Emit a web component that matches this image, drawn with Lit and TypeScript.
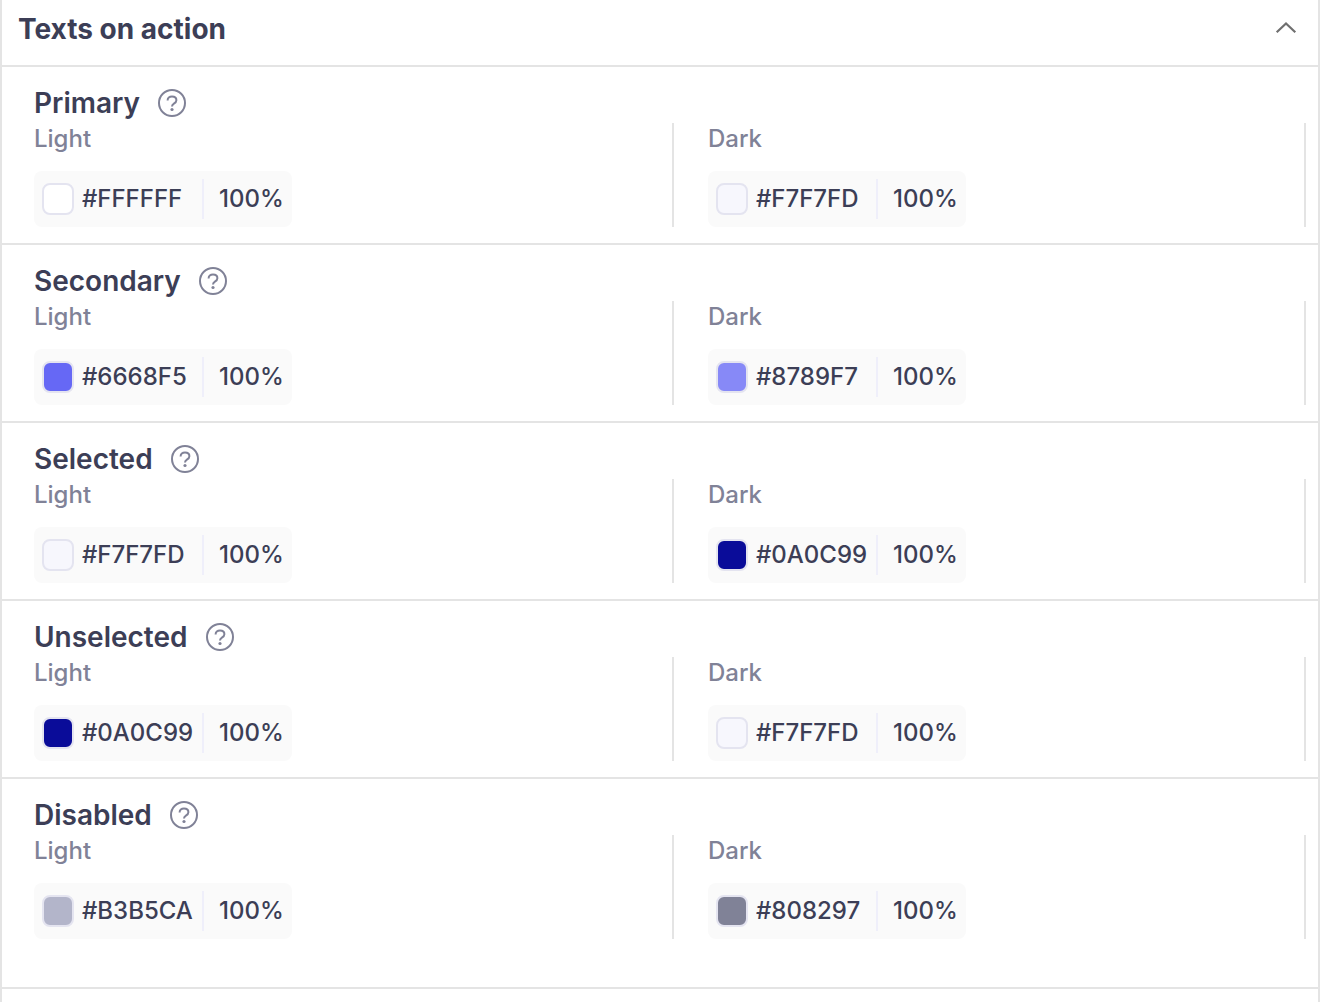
import { LitElement, html, css } from "lit";
import { customElement, property } from "lit/decorators.js";
import { styleMap } from "lit/directives/style-map.js";

interface TokenColor {
  name: string;
  light: string;
  dark: string;
}

const TOKENS: TokenColor[] = [
  { name: "Primary", light: "#FFFFFF", dark: "#F7F7FD" },
  { name: "Secondary", light: "#6668F5", dark: "#8789F7" },
  { name: "Selected", light: "#F7F7FD", dark: "#0A0C99" },
  { name: "Unselected", light: "#0A0C99", dark: "#F7F7FD" },
  { name: "Disabled", light: "#B3B5CA", dark: "#808297" },
];

@customElement("color-field")
export class ColorField extends LitElement {
  @property() label = "";
  @property() value = "";
  @property() alpha = "100%";

  static styles = css`
    :host {
      display: block;
    }
    .field {
      display: inline-flex;
      align-items: center;
      box-sizing: border-box;
      height: 56px;
      padding-left: 8px;
      border-radius: 8px;
      background: #fafafa;
      vertical-align: top;
    }
    .swatch {
      box-sizing: border-box;
      width: 32px;
      height: 32px;
      margin: 0 8px 0 0;
      padding: 0;
      border: 2px solid #e4e4f0;
      border-radius: 8px;
      cursor: pointer;
    }
    .input {
      box-sizing: border-box;
      height: 40px;
      margin: 0;
      padding: 0 0 2px;
      border: 0;
      outline: none;
      background: transparent;
      color: #3c3e56;
      font: 500 24px/32px Inter, sans-serif;
    }
    .hex {
      width: 122px;
      border-right: 2px solid #efeffa;
    }
    .alpha {
      width: 88px;
      padding-left: 15px;
    }
  `;

  render() {
    return html`
      <div class="field">
        <button
          class="swatch"
          type="button"
          aria-label="Pick ${this.label}"
          style=${styleMap({ backgroundColor: this.value })}
        ></button>
        <input class="input hex" type="text" aria-label="${this.label} hex" .value=${this.value} />
        <input class="input alpha" type="text" aria-label="${this.label} opacity" .value=${this.alpha} />
      </div>
    `;
  }
}

@customElement("app-root")
export class AppRoot extends LitElement {
  static styles = css`
    :host {
      display: block;
      background: #ffffff;
      font-family: Inter, sans-serif;
      color: #3c3e56;
    }
    .panel {
      box-sizing: border-box;
      min-height: 100vh;
      margin-right: 8px;
      border: solid #e4e4e4;
      border-width: 0 2px;
    }
    .group {
      padding-bottom: 48px;
      border-bottom: 2px solid #e4e4e4;
    }
    .header {
      display: flex;
      align-items: flex-start;
      justify-content: space-between;
      padding: 9px 20px 16px 16px;
      border-bottom: 2px solid #e4e4e4;
    }
    .heading,
    .name {
      margin: 0;
      font-size: 28px;
      line-height: 40px;
      font-weight: 600;
    }
    .heading {
      font-weight: 700;
    }
    .icon-button {
      display: flex;
      padding: 0;
      border: 0;
      background: none;
      color: #808297;
      cursor: pointer;
    }
    .toggle {
      padding-top: 7px;
      color: #6f6f6f;
    }
    .row {
      padding: 16px 12px 16px 32px;
    }
    .row + .row {
      border-top: 2px solid #e4e4e4;
    }
    .row:last-child {
      padding-bottom: 0;
    }
    .title {
      display: flex;
      align-items: center;
      gap: 18px;
    }
    .modes {
      display: grid;
      grid-template-columns: 80fr 79fr;
    }
    .mode {
      border-right: 2px solid #e4e4e4;
    }
    .mode + .mode {
      padding-left: 34px;
    }
    .mode-name {
      margin: 0 0 16px;
      font-size: 24px;
      line-height: 32px;
      font-weight: 500;
      color: #808297;
    }
  `;

  private renderMode(token: string, mode: string, value: string) {
    return html`
      <div class="mode">
        <p class="mode-name">${mode}</p>
        <color-field label="${token} ${mode}" value=${value}></color-field>
      </div>
    `;
  }

  private renderRow(t: TokenColor) {
    return html`
      <div class="row">
        <div class="title">
          <h3 class="name">${t.name}</h3>
          <button class="icon-button" type="button" aria-label="About ${t.name}">
            <svg width="28" height="28" viewBox="0 0 28 28" fill="none" stroke="currentColor" stroke-width="2">
              <circle cx="14" cy="14" r="13" />
              <path d="M9.6 11.4C9.6 9 11.4 7.6 14 7.6s4.4 1.4 4.4 3.6c0 1.8-1.2 2.6-2.5 3.4-1.3.8-1.9 1.4-1.9 3" />
              <circle cx="14" cy="20.5" r="1.6" fill="currentColor" stroke="none" />
            </svg>
          </button>
        </div>
        <div class="modes">
          ${this.renderMode(t.name, "Light", t.light)}
          ${this.renderMode(t.name, "Dark", t.dark)}
        </div>
      </div>
    `;
  }

  render() {
    return html`
      <main class="panel">
        <section class="group">
          <header class="header">
            <h2 class="heading">Texts on action</h2>
            <button class="icon-button toggle" type="button" aria-label="Collapse" aria-expanded="true">
              <svg width="24" height="24" viewBox="0 0 24 24" fill="none" stroke="currentColor" stroke-width="2.2">
                <path d="M2.7 16.2 12 7.4l9.3 8.8" />
              </svg>
            </button>
          </header>
          <div>${TOKENS.map((t) => this.renderRow(t))}</div>
        </section>
      </main>
    `;
  }
}
